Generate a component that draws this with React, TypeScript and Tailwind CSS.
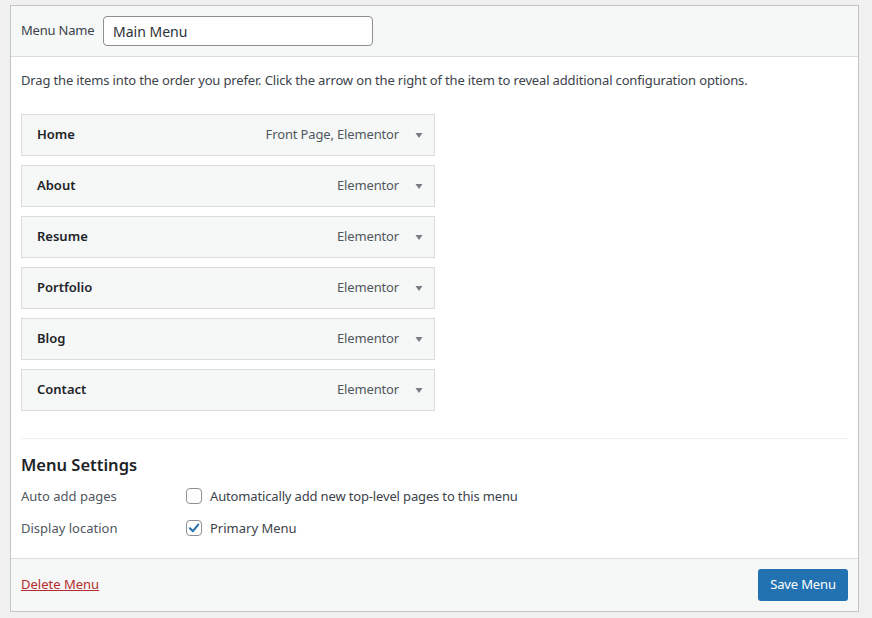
const items = [
  { title: "Home", type: "Front Page, Elementor" },
  { title: "About", type: "Elementor" },
  { title: "Resume", type: "Elementor" },
  { title: "Portfolio", type: "Elementor" },
  { title: "Blog", type: "Elementor" },
  { title: "Contact", type: "Elementor" },
];

function Arrow() {
  return (
    <svg width="10" height="10" viewBox="0 0 10 10" className="shrink-0">
      <path d="M1.5 3 L8.5 3 L5 8 Z" fill="#787c82" />
    </svg>
  );
}

function Check() {
  return (
    <svg width="14" height="14" viewBox="0 0 14 14">
      <path d="M3 7.2 L5.9 10.2 L11.2 3.6" fill="none" stroke="#2271b1" strokeWidth="2" strokeLinecap="round" strokeLinejoin="round" />
    </svg>
  );
}

export default function App() {
  return (
    <div className="min-h-[618px] bg-[#f0f0f1] pt-[5px] pl-[10px] pr-[13px] pb-[6px] text-[13px] text-[#3c434a] [font-family:'Noto_Sans',sans-serif]">
      <div className="border border-[#c3c4c7] bg-white">
        {/* header */}
        <div className="flex h-[51px] items-center border-b border-[#dcdcde] bg-[#f6f7f7] px-[10px]">
          <span className="w-[82px] shrink-0 whitespace-nowrap text-[13px] tracking-[-0.2px] text-[#3c434a]">Menu Name</span>
          <div className="flex h-[30px] w-[270px] items-center rounded-[4px] border border-[#8c8f94] bg-white px-[9px] text-[14px] text-[#2c3338]">
            Main Menu
          </div>
        </div>

        {/* body */}
        <div className="px-[10px] pt-[13px]">
          <p className="text-[13px] leading-[20px] tracking-[-0.15px] text-[#3c434a]">
            Drag the items into the order you prefer. Click the arrow on the right of the item to reveal additional configuration options.
          </p>

          <ul className="mt-[24px] flex w-[414px] flex-col gap-[9px]">
            {items.map((item) => (
              <li
                key={item.title}
                className="flex h-[42px] items-center justify-between border border-[#dcdcde] bg-[#f6f7f7] pl-[15px] pr-[10px]"
              >
                <span className="text-[13px] font-semibold text-[#1d2327]">{item.title}</span>
                <span className="flex items-center gap-[15px] text-[13px] tracking-[-0.15px] text-[#50575e]">
                  {item.type}
                  <Arrow />
                </span>
              </li>
            ))}
          </ul>

          <div className="mt-[27px] border-t border-[#f0f0f1]" />

          <h3 className="mt-[14px] text-[16.5px] font-semibold text-[#1d2327]">Menu Settings</h3>

          <div className="mt-[8px] grid grid-cols-[165px_1fr] gap-y-[12px] pb-[20px]">
            <span className="text-[13px] leading-[20px] text-[#50575e]">Auto add pages</span>
            <label className="flex items-center gap-[8px] leading-[20px] tracking-[-0.15px]">
              <span className="h-[16px] w-[16px] rounded-[4px] border border-[#8c8f94] bg-white" />
              Automatically add new top-level pages to this menu
            </label>
            <span className="text-[13px] leading-[20px] text-[#50575e]">Display location</span>
            <label className="flex items-center gap-[8px] leading-[20px]">
              <span className="flex h-[16px] w-[16px] items-center justify-center rounded-[4px] border border-[#8c8f94] bg-white">
                <Check />
              </span>
              Primary Menu
            </label>
          </div>
        </div>

        {/* footer */}
        <div className="flex h-[53px] items-center justify-between border-t border-[#dcdcde] bg-[#f6f7f7] px-[10px]">
          <a href="#" className="text-[13px] text-[#b32d2e] underline">
            Delete Menu
          </a>
          <button className="h-[32px] w-[90px] rounded-[3px] bg-[#2271b1] text-[13px] tracking-[-0.15px] text-white">Save Menu</button>
        </div>
      </div>
    </div>
  );
}
